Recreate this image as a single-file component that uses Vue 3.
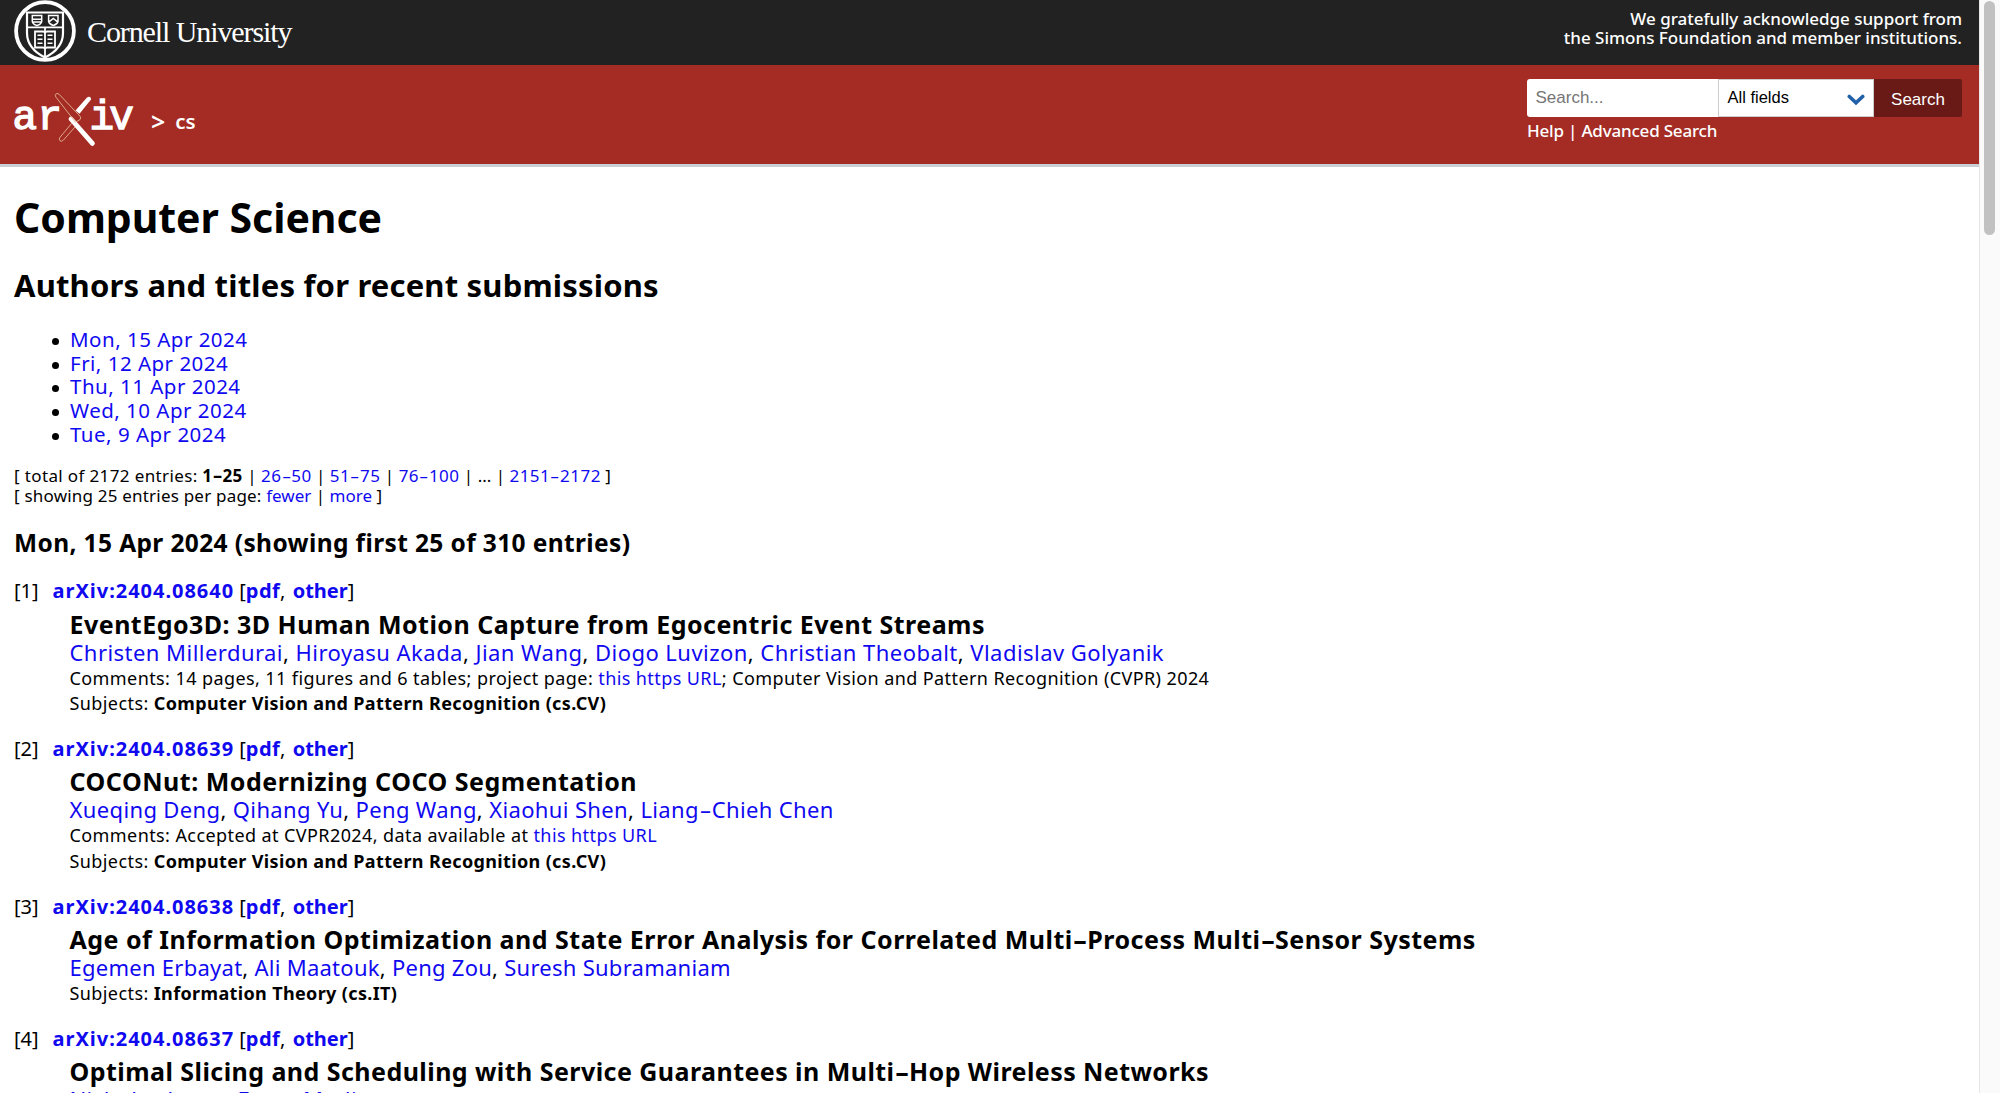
<script setup>
import { h } from 'vue'

const days = ['Mon, 15 Apr 2024', 'Fri, 12 Apr 2024', 'Thu, 11 Apr 2024', 'Wed, 10 Apr 2024', 'Tue, 9 Apr 2024']

// Renders text with its hyphens drawn wide.
const Dashed = (props) =>
  props.text.split(/(-)/).map((part) => (part === '-' ? h('span', { class: 'wide-dash' }, part) : part))
Dashed.props = ['text']

const entries = [
  {
    n: 1,
    id: 'arXiv:2404.08640',
    title: 'EventEgo3D: 3D Human Motion Capture from Egocentric Event Streams',
    titleSpacing: 0.476,
    authors: ['Christen Millerdurai', 'Hiroyasu Akada', 'Jian Wang', 'Diogo Luvizon', 'Christian Theobalt', 'Vladislav Golyanik'],
    authorSpacing: 0.46,
    comments: { before: '14 pages, 11 figures and 6 tables; project page: ', link: 'this https URL', after: '; Computer Vision and Pattern Recognition (CVPR) 2024' },
    subject: 'Computer Vision and Pattern Recognition (cs.CV)',
  },
  {
    n: 2,
    id: 'arXiv:2404.08639',
    title: 'COCONut: Modernizing COCO Segmentation',
    titleSpacing: 0.514,
    authors: ['Xueqing Deng', 'Qihang Yu', 'Peng Wang', 'Xiaohui Shen', 'Liang-Chieh Chen'],
    authorSpacing: 0.365,
    comments: { before: 'Accepted at CVPR2024, data available at ', link: 'this https URL', after: '' },
    subject: 'Computer Vision and Pattern Recognition (cs.CV)',
  },
  {
    n: 3,
    id: 'arXiv:2404.08638',
    title: 'Age of Information Optimization and State Error Analysis for Correlated Multi-Process Multi-Sensor Systems',
    titleSpacing: 0.485,
    authors: ['Egemen Erbayat', 'Ali Maatouk', 'Peng Zou', 'Suresh Subramaniam'],
    authorSpacing: 0.263,
    subject: 'Information Theory (cs.IT)',
  },
  {
    n: 4,
    id: 'arXiv:2404.08637',
    title: 'Optimal Slicing and Scheduling with Service Guarantees in Multi-Hop Wireless Networks',
    titleSpacing: 0.445,
    authors: ['Nicholas Jones', 'Eytan Modiano'],
    authorSpacing: 0.4,
    subject: 'Networking and Internet Architecture (cs.NI)',
  },
]
</script>

<template>
  <div class="window">
    <div class="page">
      <div class="topbar">
        <a class="cornell">
          <svg class="seal" width="62" height="64" viewBox="0 0 62 64" fill="none" stroke="#fff">
            <circle cx="31" cy="31" r="28.9" stroke-width="3.8" />
            <path d="M13 12.5H49V33C49 44 42 52 31 57.5C20 52 13 44 13 33Z" stroke-width="2.2" />
            <path d="M13 27.3H49M31 27.3V57" stroke-width="1.8" />
            <path d="M18.3 15.5H27.7V21.5Q27 24.5 23 25.5Q19 24.5 18.3 21.5ZM18.3 19.3H27.7M19 22H27" stroke-width="1.5" />
            <path d="M34.6 15.5H44V21.5Q43.2 24.5 39.3 25.5Q35.4 24.5 34.6 21.5ZM35 21.8L39.3 18.5L43.6 21.8" stroke-width="1.5" />
            <path d="M21 31.5H29L31 32.5L33 31.5H41V47.5H33L31 48.5L29 47.5H21Z" stroke-width="1.8" />
            <path d="M23.5 35.3H28.5M23.5 39.3H28.5M23.5 43.3H28.5M33.5 35.3H38.5M33.5 39.3H38.5M33.5 43.3H38.5" stroke-width="1.6" />
          </svg>
          <span class="cornell-name">Cornell University</span>
        </a>
        <div class="support">
          <div>We gratefully acknowledge support from</div>
          <div>the Simons Foundation and member institutions.</div>
        </div>
      </div>

      <div class="banner">
        <div class="crumbs">
          <svg class="arxiv" width="124" height="60" viewBox="10 90 124 60">
            <g class="mono">
              <text x="12.5" y="129.2">a</text>
              <text x="37.5" y="129.2">r</text>
              <text x="89.5" y="129.2">i</text>
              <text x="109.3" y="129.2">v</text>
            </g>
            <path d="M87 97.6Q89.5 95.8 91 98.2L91 99.4L79.5 113.8L75.5 110.6Z" fill="#fff" />
            <path d="M71 119L92.4 143.4" stroke="#fff" stroke-width="4.8" stroke-linecap="round" />
            <path d="M59 94.2Q56.8 92.6 55.6 94.3Q54.7 95.7 56 97.2L75.5 122.3L80 119.6Q81.5 118 80 116.2Z" fill="none" stroke="#e3b690" stroke-width="0.9" />
            <path d="M71.8 123.2L60 137.3Q58.6 139.2 60 140.8Q61.7 142 63.3 140.2L75 127" fill="none" stroke="#e3b690" stroke-width="0.9" />
          </svg>
          <span class="gt">&gt;</span>
          <span class="cs">cs</span>
        </div>
        <div class="search">
          <div class="controls">
            <div class="field">Search...</div>
            <div class="select">
              <span>All fields</span>
              <svg width="18" height="12" viewBox="0 0 18 12"><path d="M2.3 2.5L9 8.8L15.7 2.5" fill="none" stroke="#2160a8" stroke-width="3.6" stroke-linecap="round" /></svg>
            </div>
            <div class="button">Search</div>
          </div>
          <div class="help"><a>Help</a> | <a>Advanced Search</a></div>
        </div>
      </div>

      <main>
        <h1>Computer Science</h1>
        <h2>Authors and titles for recent submissions</h2>
        <ul>
          <li v-for="d in days" :key="d"><a>{{ d }}</a></li>
        </ul>
        <div class="paging">
          <div><span class="total">[ total of 2172 entries: </span><b class="range"><Dashed text="1-25" /></b> | <a class="range"><Dashed text="26-50" /></a> | <a class="range"><Dashed text="51-75" /></a> | <a class="range"><Dashed text="76-100" /></a> | ... | <a class="range"><Dashed text="2151-2172" /></a> ]</div>
          <div><span class="show">[ showing 25 entries per page: </span><a>fewer</a> | <a>more</a> ]</div>
        </div>
        <h3>Mon, 15 Apr 2024 (showing first 25 of 310 entries)</h3>
        <article v-for="e in entries" :key="e.n">
          <div class="ids"><span class="num">[{{ e.n }}]</span><a class="id">{{ e.id }}</a> [<a class="pdf">pdf</a><span class="sep">, </span><a>other</a>]</div>
          <div class="meta">
            <div class="title" :style="{ letterSpacing: e.titleSpacing + 'px' }"><Dashed :text="e.title" /></div>
            <div class="authors" :style="{ letterSpacing: e.authorSpacing + 'px' }"><template v-for="(a, i) in e.authors" :key="a"><a><Dashed :text="a" /></a><template v-if="i < e.authors.length - 1">, </template></template></div>
            <div v-if="e.comments" class="line">Comments: {{ e.comments.before }}<a>{{ e.comments.link }}</a>{{ e.comments.after }}</div>
            <div class="line">Subjects: <b>{{ e.subject }}</b></div>
          </div>
        </article>
      </main>
    </div>
    <div class="scrollbar"><div class="thumb"></div></div>
  </div>
</template>

<style>
body { margin: 0; overflow: hidden; }
.wide-dash { display: inline-block; transform: scaleX(1.7); margin: 0 0.13em; letter-spacing: 0; }
</style>

<style scoped>
.window { display: flex; width: 2000px; height: 1093px; overflow: hidden; background: #fff; color: #000; font-family: "Noto Sans", "Open Sans", sans-serif; }
.page { flex: 1; min-width: 0; overflow: hidden; }
a { color: #1009f0; text-decoration: none; }
.topbar { height: 65px; background: #222; color: #fff; display: flex; justify-content: space-between; overflow: hidden; }
.cornell { display: flex; color: #fff; padding-left: 14px; }
.cornell-name { margin-left: 11px; font: 30px/64px "Liberation Serif", serif; letter-spacing: -1.1px; white-space: nowrap; }
.support { padding: 8.5px 17px 0 0; text-align: right; font-size: 17px; line-height: 19.5px; font-weight: 500; letter-spacing: -0.01px; }
.banner { height: 98.5px; background: #a42c25; border-bottom: 3.5px solid #c8d0d4; display: flex; justify-content: space-between; color: #fff; }
.crumbs { display: flex; padding: 25px 0 0 10px; }
.mono { font: 41px "Liberation Mono", monospace; fill: #fff; stroke: #fff; stroke-width: 1.3px; }
.gt { margin: 13.5px 0 0 17px; font-size: 25px; line-height: 34px; font-weight: 600; }
.cs { margin: 13px 0 0 10px; font-size: 20.5px; line-height: 36px; font-weight: 600; }
.search { width: 435px; padding: 14px 17px 0 0; }
.controls { display: flex; height: 38px; font: 17px "Liberation Sans", sans-serif; }
.field { width: 191px; box-sizing: border-box; padding-left: 8.5px; line-height: 38px; background: #fff; color: #757575; border-radius: 3px 0 0 3px; }
.select { flex: 1; box-sizing: border-box; border: 1px solid #ccc; background: #fff; color: #000; display: flex; align-items: center; justify-content: space-between; padding: 0 8px 0 8.5px; font-size: 16.5px; }
.select span { margin-top: -1px; }
.select svg { margin-top: 3px; }
.button { width: 88px; background: #691a16; color: #fff; text-align: center; line-height: 41px; border-radius: 0 2px 2px 0; }
.help { font-size: 17px; line-height: 20px; margin-top: 4px; letter-spacing: -0.2px; font-weight: 500; }
.help a { color: #fff; }
main { display: flex; flex-direction: column; padding-left: 14px; white-space: pre; }
h1, h2, h3, ul { margin: 0; }
h1 { margin-top: 26.5px; font-size: 41px; line-height: 48px; letter-spacing: -0.03px; }
h2 { margin-top: 25.5px; font-size: 31px; line-height: 36px; letter-spacing: 0.18px; }
ul { margin-top: 25.5px; padding: 0 0 0 38px; list-style: none; font-size: 20.5px; line-height: 23.7px; letter-spacing: 0.49px; }
li { display: flex; align-items: center; gap: 11px; height: 23.7px; }
li::before { content: ""; width: 7px; height: 7px; border-radius: 50%; background: #000; margin-top: 3px; }
.paging { margin-top: 19.6px; font-size: 17px; line-height: 19.7px; }
.total { letter-spacing: 0.369px; }
.show { letter-spacing: 0.204px; }
.range { letter-spacing: 0.45px; }
h3 { margin-top: 23.4px; font-size: 24.5px; line-height: 28px; letter-spacing: 0.38px; }
article { margin-top: 19.9px; }
article:first-of-type { margin-top: 22.5px; }
.ids { font-size: 20px; line-height: 24px; }
.ids a { font-weight: 700; }
.num { margin-right: 14px; }
.ids .id { letter-spacing: 0.97px; }
.ids .pdf { letter-spacing: 0.4px; }
.sep { letter-spacing: 1px; }
.meta { padding-left: 55.5px; }
.title { margin-top: 6.3px; font-size: 25px; font-weight: 700; line-height: 28px; }
.authors { margin-top: 1px; font-size: 22px; line-height: 26px; margin-bottom: 0.9px; }
.line { font-size: 18px; line-height: 25.8px; letter-spacing: 0.41px; }
.line b { letter-spacing: 0.36px; }
.scrollbar { width: 21px; box-sizing: border-box; background: #fafafa; border-left: 1px solid #e6e6e6; display: flex; justify-content: center; padding-top: 1px; padding-right: 1px; }
.thumb { width: 11px; height: 234px; border-radius: 6px; background: #c1c1c1; }
</style>
